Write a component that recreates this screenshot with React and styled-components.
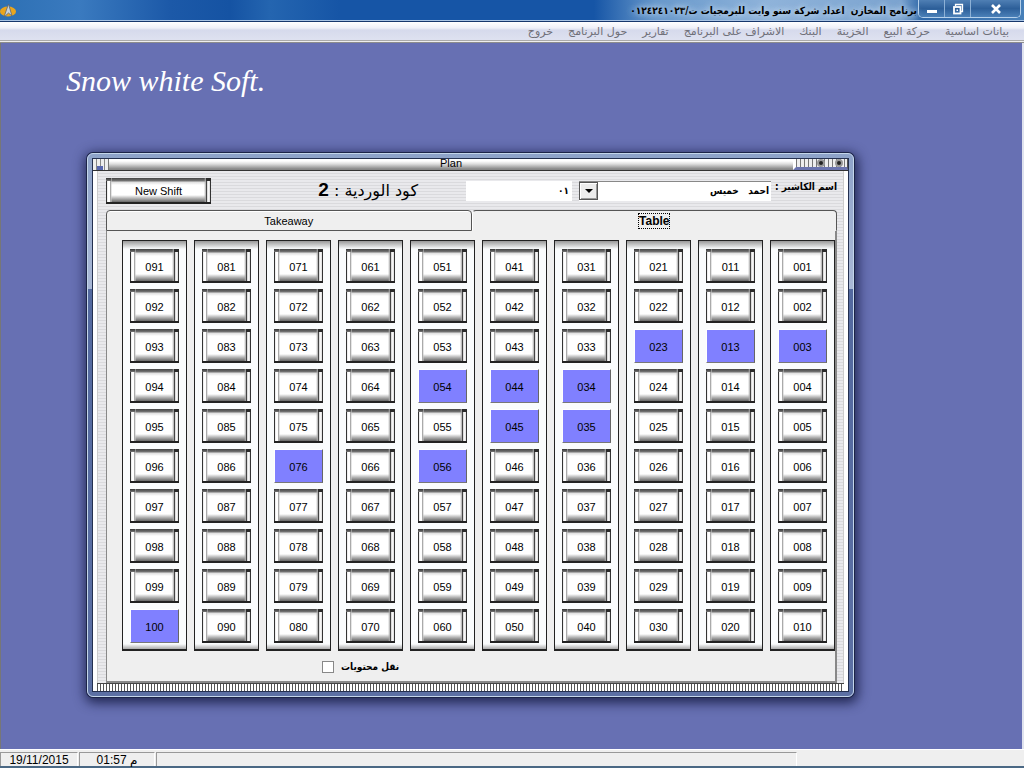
import React, { useState } from 'react'
import styled, { createGlobalStyle, css } from 'styled-components'

const menuItems = [
    "بيانات اساسية",
    "حركة البيع",
    "الخزينة",
    "البنك",
    "الاشراف على البرنامج",
    "تقارير",
    "حول البرنامج",
    "خروج",
]

const busyTables = [3, 13, 23, 34, 35, 44, 45, 54, 56, 76, 100]

const columns = Array.from({ length: 10 }, (_, col) =>
    Array.from({ length: 10 }, (_, row) => col * 10 + row + 1)
)

const AppIcon = () => (
    <svg width="16" height="16" viewBox="0 0 16 16" aria-hidden="true">
        <ellipse cx="8" cy="9.500" rx="8" ry="5" fill="#e9a51e" />
        <path d="M8.500 2 L12 14 L8.500 11 L4 15 Z" fill="#c9d3dc" stroke="#5d6670" strokeWidth="0.800" />
    </svg>
)

const TitleBar = () => (
    <TitleWrapper>
        <WindowButtons>
            <WindowButton className="close" aria-label="Close">
                <svg width="12" height="10" viewBox="0 0 12 10">
                    <path d="M2 1 L10 9 M10 1 L2 9" stroke="#fff" strokeWidth="2.600" />
                </svg>
            </WindowButton>
            <WindowButton aria-label="Restore">
                <svg width="12" height="12" viewBox="0 0 12 12" fill="none" stroke="#fff">
                    <path d="M3.500 3 V1.500 H10.500 V8.500 H9" strokeWidth="1.300" />
                    <rect x="2" y="4" width="6.500" height="6.500" strokeWidth="1.800" />
                    <rect x="4.500" y="6.500" width="1.500" height="1.500" stroke="none" fill="#fff" />
                </svg>
            </WindowButton>
            <WindowButton aria-label="Minimize">
                <svg width="12" height="12" viewBox="0 0 12 12">
                    <rect x="1" y="7" width="10" height="3" fill="#fff" />
                </svg>
            </WindowButton>
        </WindowButtons>
        <h1>برنامج المخازن&nbsp; اعداد شركة سنو وايت للبرمجيات ت/٠١٢٤٢٤١٠٢٣</h1>
        <AppIcon />
    </TitleWrapper>
)

const App = () => {
    const [busy, setBusy] = useState(busyTables)
    const [tab, setTab] = useState("table")

    const toggleTable = (id) => {
        if (busy.includes(id)) {
            setBusy(busy.filter(item => item !== id))
        } else {
            setBusy([...busy, id])
        }
    }

    return (
        <Page dir="rtl">
            <GlobalStyle />
            <TitleBar />
            <Menu>
                {menuItems.map(item => (
                    <MenuItem key={item}>{item}</MenuItem>
                ))}
            </Menu>
            <Workspace>
                <Brand dir="ltr">Snow white Soft.</Brand>
                <PlanWindow>
                    <PlanInner>
                        <PlanTitle>
                            <Knobs>
                                <i />
                                <i />
                            </Knobs>
                            <h2>Plan</h2>
                            <Grip />
                        </PlanTitle>
                        <PlanBody>
                            <Toolbar>
                                <CashierLabel htmlFor="cashier">اسم الكاشير :</CashierLabel>
                                <SelectWrapper>
                                    <select id="cashier" defaultValue="1">
                                        <option value="1">احمد&nbsp;&nbsp; خميس</option>
                                    </select>
                                    <Arrow>
                                        <svg width="8" height="4" viewBox="0 0 8 4">
                                            <path d="M0 0 H8 L4 4 Z" fill="#000" />
                                        </svg>
                                    </Arrow>
                                </SelectWrapper>
                                <CodeInput defaultValue="٠١" aria-label="كود الكاشير" />
                                <ShiftCode>
                                    كود الوردية : <b>2</b>
                                </ShiftCode>
                                <ShiftButton>New Shift</ShiftButton>
                            </Toolbar>
                            <Tabs role="tablist">
                                <Tab
                                    role="tab"
                                    aria-selected={tab === "table"}
                                    $active={tab === "table"}
                                    onClick={() => setTab("table")}
                                >
                                    <span>Table</span>
                                </Tab>
                                <Tab
                                    role="tab"
                                    aria-selected={tab === "takeaway"}
                                    $active={tab === "takeaway"}
                                    onClick={() => setTab("takeaway")}
                                >
                                    <span>Takeaway</span>
                                </Tab>
                            </Tabs>
                            <Panel>
                                <Columns>
                                    {columns.map(items => (
                                        <Column key={items[0]}>
                                            {items.map(id => (
                                                <TableButton
                                                    key={id}
                                                    $busy={busy.includes(id)}
                                                    onClick={() => toggleTable(id)}
                                                >
                                                    {String(id).padStart(3, "0")}
                                                </TableButton>
                                            ))}
                                        </Column>
                                    ))}
                                </Columns>
                                <Transfer>
                                    نقل محتويات
                                    <input type="checkbox" />
                                </Transfer>
                            </Panel>
                        </PlanBody>
                        <Teeth />
                    </PlanInner>
                </PlanWindow>
            </Workspace>
            <StatusBar dir="ltr">
                <StatusCell $width="78px">19/11/2015</StatusCell>
                <StatusCell $width="76px">01:57 م</StatusCell>
                <StatusCell $width="62.6%" />
            </StatusBar>
        </Page>
    )
}

export default App


const GlobalStyle = createGlobalStyle`
    *{
        box-sizing: border-box;
    }
    body{
        margin: 0;
        font-family: "Liberation Sans", "DejaVu Sans", sans-serif;
        font-size: 11px;
        color: #000;
    }
    h1, h2, p{
        margin: 0;
    }
    button, input, select{
        font: inherit;
        color: inherit;
        padding: 0;
    }
`
const arabicBold = css`
    font: bold 10px/16px "DejaVu Sans Condensed", "DejaVu Sans", sans-serif;
    white-space: nowrap;
`
const bevel = css`
    border: 0;
    background:
        linear-gradient(#2b2b2b, #2b2b2b) top right / 5px 3px no-repeat,
        linear-gradient(#333, #777) top left / 5px 3px no-repeat,
        linear-gradient(#222, #222) bottom / 100% 2px no-repeat,
        linear-gradient(90deg, #333 1px, #ddd 1px, #fff 2px, #fff 4px, #888 4px, #ccc 5px, #fff0 6px) left / 6px 100% no-repeat,
        linear-gradient(270deg, #333 1px, #ddd 1px, #fff 3px, #bbb 4px, #444 4px, #444 5px, #aaa 5px, #fff0 7px) right / 7px 100% no-repeat,
        linear-gradient(#444, #777 3px, #ddd 4px, #fff 7px, #fff calc(100% - 9px), #bbb calc(100% - 6px), #666 calc(100% - 2px));
`
const Page = styled.div`
    min-height: 100vh;
    display: flex;
    flex-direction: column;
    background: #efefef;
`
const TitleWrapper = styled.header`
    height: 22px;
    display: flex;
    align-items: flex-start;
    border-bottom: 1px solid #17376c;
    box-shadow: inset 0 -1px #a9c4e4;
    background:
        radial-gradient(ellipse at 32px 18px, #dcebd8 8px, #dcebd800 22px),
        radial-gradient(ellipse at 117px 22px, #a9b4c0 6px, #a9b4c000 22px),
        linear-gradient(90deg, #2d70b4 0, #3a7abf 80px, #1c59a8 170px, #1553a3 230px, #2465b0 270px, #1655a6 340px, #1655a6 58%, #6798cb 64%, #8fb3da 75%, #7ba3cf 88%, #2f68a8 90%, #477fb8 100%);

    h1{
        padding-top: 3px;
        ${arabicBold}
        text-shadow: 0 0 6px #c3d9ef, 0 0 6px #c3d9ef;
    }
    > svg{
        margin-top: 2px;
        margin-right: auto;
    }
`
const WindowButtons = styled.div`
    display: flex;
    margin: 0 3px 0 1px;
    border: 1px solid #b5d0ea;
    border-top: 0;
    border-radius: 0 0 5px 5px;
    overflow: hidden;
`
const WindowButton = styled.button`
    width: 26px;
    height: 17px;
    display: flex;
    align-items: center;
    justify-content: center;
    border: 0;
    border-right: 1px solid #8db1d6;
    background: linear-gradient(#4f7fb4, #2d5f99 50%, #4a80b8);

    &.close{
        width: 49px;
        border-right: 0;
    }
`
const Menu = styled.nav`
    height: 21px;
    display: flex;
    align-items: flex-start;
    gap: 15px;
    padding: 0 15px;
    border-bottom: 1px solid #8d8d8d;
    box-shadow: inset 0 -1px #eee, inset 0 -2px #aaa;
    background: linear-gradient(#fff, #eef0f8 6px, #d6daec 8px, #e0e3f1);
`
const MenuItem = styled.button`
    border: 0;
    background: none;
    color: #6f6f78;
    font: 11px/20px "DejaVu Sans", sans-serif;
    white-space: nowrap;
`
const Workspace = styled.main`
    flex: 1;
    padding: 20px 168px 50px 86px;
    border-left: 1px solid #777;
    border-right: 2px solid #dfe2ee;
    background: #6770b3;
`
const Brand = styled.p`
    margin: 0 -21px 54px;
    color: #fff;
    font: italic 30px/36px "Liberation Serif", serif;
`
const PlanWindow = styled.section`
    padding: 4px;
    border: 1px solid #c4d6ea;
    border-radius: 6px;
    background: linear-gradient(#8ea3c9, #a9b8d6 25%, #53699f 25%, #5c70a4);
    box-shadow: 0 0 0 1px #1c2448, 1px 3px 12px 3px #10153ccc;
`
const PlanInner = styled.div`
    border: 1px solid #24304f;
    background: #fff;
`
const PlanTitle = styled.header`
    height: 12px;
    display: flex;
    border-bottom: 1px solid #333;
    background: linear-gradient(#fff 2px, #ddd 5px, #888 10px);

    h2{
        flex: 1;
        font-size: 11px;
        font-weight: normal;
        line-height: 8px;
        text-align: center;
    }
`
const Knobs = styled.div`
    width: 55px;
    display: flex;
    gap: 10px;
    padding: 0 4px;
    border-right: 1px solid #555;
    border-left: 3px solid #fff;
    border-bottom: 3px solid #6b74ae;
    background: repeating-linear-gradient(90deg, #777 0 1px, #eee 1px 4px);

    i{
        width: 8px;
        height: 8px;
        border: 2px solid #999;
        border-radius: 4px;
        background: #222;
    }
`
const Grip = styled.div`
    width: 16px;
    border-right: 1px solid #777;
    background:
        linear-gradient(#5867ae, #5867ae) 4px 7px / 6px 4px no-repeat,
        repeating-linear-gradient(90deg, #eee 0 3px, #888 3px 4px);
`
const PlanBody = styled.div`
    margin: 0 4px;
    padding: 0 6px 0 8px;
    border-left: 1px solid #ccc;
    border-right: 1px solid #ccc;
    background: repeating-linear-gradient(#e9e9ec 0 2px, #dadadd 2px 3px);
`
const Toolbar = styled.div`
    height: 39px;
    display: flex;
    align-items: center;
`
const CashierLabel = styled.label`
    width: 66px;
    padding-bottom: 8px;
    ${arabicBold}
`
const SelectWrapper = styled.div`
    position: relative;
    width: 192px;
    height: 20px;
    border-top: 1px solid #888;

    select{
        width: 100%;
        height: 100%;
        padding: 0 2px;
        appearance: none;
        border: 0;
        background: #fff;
        ${arabicBold}
    }
`
const Arrow = styled.span`
    position: absolute;
    top: 0;
    left: 0;
    width: 19px;
    height: 18px;
    display: flex;
    align-items: center;
    justify-content: center;
    pointer-events: none;
    border: 1px solid #555;
    box-shadow: inset 1px 1px #fff, inset -1px -1px #999;
    background: #ececec;
`
const CodeInput = styled.input`
    width: 106px;
    height: 20px;
    margin-right: 7px;
    padding: 0 3px;
    border: 0;
    background: #fff;
    ${arabicBold}
`
const ShiftCode = styled.p`
    margin-right: 48px;
    font: 16px/20px "DejaVu Sans", sans-serif;

    b{
        font-family: "Liberation Sans", sans-serif;
        font-size: 19px;
    }
`
const ShiftButton = styled.button`
    ${bevel}
    width: 105px;
    height: 26px;
    margin-right: auto;
`
const Tabs = styled.div`
    display: flex;
`
const Tab = styled.button`
    flex: 1;
    height: 21px;
    border: 1px solid #555;
    border-radius: 4px 4px 0 0;
    background: #efefef;

    ${({ $active }) => $active ? css`
        border-bottom-color: #efefef;
        border-left-color: #fff;
        font-size: 12px;
        font-weight: bold;

        span{
            outline: 1px dotted #000;
        }
    ` : css`
        box-shadow: inset 0 1px #fff;
    `}
`
const Panel = styled.div`
    padding: 9px 0 6px 15px;
    border: 1px solid #888;
    border-top: 0;
    border-right-width: 2px;
    border-bottom-width: 2px;
    background: #efefef;
`
const Columns = styled.div`
    display: grid;
    grid-template-columns: repeat(10, 1fr);
    gap: 7px;
`
const Column = styled.div`
    display: flex;
    flex-direction: column;
    gap: 6px;
    padding: 8px 7px 6px;
    border: 1px solid #222;
    border-bottom-width: 2px;
    background: linear-gradient(#999, #fafcfd 8px, #fafcfd calc(100% - 5px), #aaa);
`
const TableButton = styled.button`
    ${bevel}
    height: 34px;
    padding-top: 2px;

    ${({ $busy }) => $busy && css`
        border: 1px solid #fff;
        border-right-color: #666;
        border-bottom-color: #777;
        background: #8080ff;
    `}
`
const Transfer = styled.label`
    width: fit-content;
    display: flex;
    align-items: center;
    gap: 7px;
    margin: 8px auto 0 200px;
    ${arabicBold}

    input{
        width: 12px;
        height: 12px;
        margin: 0;
        appearance: none;
        border: 1px solid #888;
        background: #fff;
    }
`
const Teeth = styled.div`
    height: 8px;
    margin: 0 4px;
    border-top: 1px solid #444;
    background: repeating-linear-gradient(90deg, #555 0 1px, #fff 1px 3px);
`
const StatusBar = styled.footer`
    height: 19px;
    display: flex;
    gap: 1px;
    padding-top: 2px;
    border-top: 1px solid #fff;
    border-bottom: 2px solid #4a6884;
    background: #efefef;
`
const StatusCell = styled.div`
    width: ${({ $width }) => $width};
    border: 1px solid #999;
    border-bottom: 0;
    border-right-color: #fff;
    font-size: 12px;
    line-height: 14px;
    text-align: center;
`
